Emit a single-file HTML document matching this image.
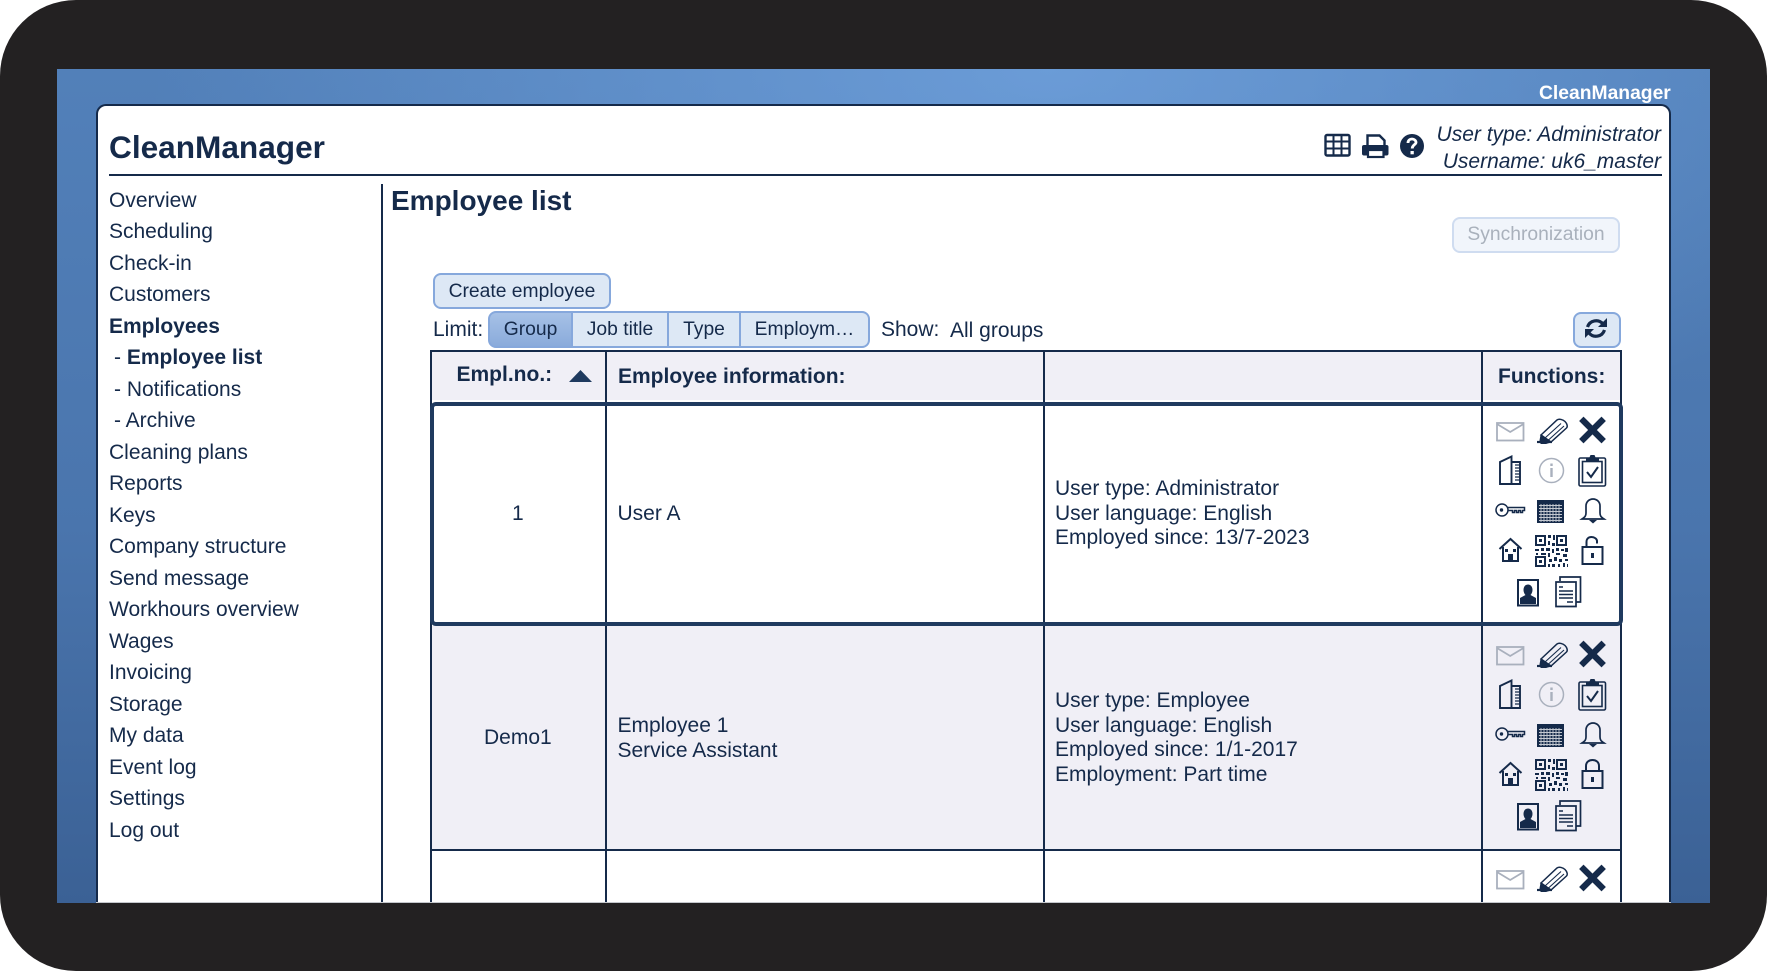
<!DOCTYPE html>
<html lang="en"><head><meta charset="utf-8"><title>CleanManager</title>
<style>
html,body{margin:0;padding:0;width:1767px;height:971px;overflow:hidden;background:#fff}
*{box-sizing:border-box}
body{font-family:"Liberation Sans",sans-serif;color:#152a4a;position:relative}
#bezel{position:absolute;left:0;top:0;width:1767px;height:971px;background:#232122;border-radius:76px}
#screen{position:absolute;left:57px;top:69px;width:1653px;height:834px;overflow:hidden;
background:radial-gradient(ellipse 900px 420px at 60% 0%,rgba(115,165,225,.75),rgba(115,165,225,0) 100%),linear-gradient(180deg,#5280b9 0%,#4a75ad 55%,#3b6195 100%)}
#panel{position:absolute;left:96px;top:104px;width:1575px;height:799px;background:#fff;border:2px solid #152a4a;border-bottom:0;border-radius:10px 10px 0 0}
.a{position:absolute;white-space:pre}
.t{font-size:21px;line-height:24px}
.nav{font-size:21px;line-height:24px}
.b{font-weight:bold}
.box{position:absolute}
.btn{position:absolute;border:2px solid #86a8dc;background:#dde8f5;border-radius:8px;text-align:center;font-size:19.3px;line-height:33px}
.seg{position:absolute;top:311px;height:37px;border:2px solid #86a8dc;border-left-width:0;background:#dde8f5;text-align:center;font-size:19.3px;line-height:33px}
.l{position:absolute;background:#152a4a}
</style></head><body>
<div id="bezel"></div>
<div id="screen"></div>
<div class="a b" style="left:1539px;top:83px;font-size:19.3px;line-height:22px;color:#fff">CleanManager</div>
<div id="panel"></div>

<div class="a b" style="left:109px;top:128px;font-size:31.6px;line-height:38px">CleanManager</div>
<div class="l" style="left:109px;top:174px;width:1553px;height:2px"></div>
<div class="l" style="left:381px;top:184px;width:2px;height:719px"></div>

<div class="a" style="right:106px;top:123px;font-size:21px;line-height:24px;font-style:italic">User type: Administrator</div>
<div class="a" style="right:106px;top:150px;font-size:21px;line-height:24px;font-style:italic">Username: uk6_master</div>

<div class="a nav" style="left:109px;top:188.500px">Overview</div>
<div class="a nav" style="left:109px;top:220px">Scheduling</div>
<div class="a nav" style="left:109px;top:251.500px">Check-in</div>
<div class="a nav" style="left:109px;top:283px">Customers</div>
<div class="a nav b" style="left:109px;top:314.500px">Employees</div>
<div class="a nav" style="left:114px;top:346px">- <span class="b">Employee list</span></div>
<div class="a nav" style="left:114px;top:377.500px">- Notifications</div>
<div class="a nav" style="left:114px;top:409px">- Archive</div>
<div class="a nav" style="left:109px;top:440.500px">Cleaning plans</div>
<div class="a nav" style="left:109px;top:472px">Reports</div>
<div class="a nav" style="left:109px;top:503.500px">Keys</div>
<div class="a nav" style="left:109px;top:535px">Company structure</div>
<div class="a nav" style="left:109px;top:566.500px">Send message</div>
<div class="a nav" style="left:109px;top:598px">Workhours overview</div>
<div class="a nav" style="left:109px;top:629.500px">Wages</div>
<div class="a nav" style="left:109px;top:661px">Invoicing</div>
<div class="a nav" style="left:109px;top:692.500px">Storage</div>
<div class="a nav" style="left:109px;top:724px">My data</div>
<div class="a nav" style="left:109px;top:755.500px">Event log</div>
<div class="a nav" style="left:109px;top:787px">Settings</div>
<div class="a nav" style="left:109px;top:818.500px">Log out</div>

<div class="a b" style="left:391px;top:184px;font-size:28px;line-height:34px">Employee list</div>

<div class="btn" style="left:1452px;top:217px;width:168px;height:36px;background:#f1f5fb;border-color:#cfdcf0;color:#a9b1bc;line-height:32px">Synchronization</div>
<div class="btn" style="left:433px;top:273px;width:178px;height:36px">Create employee</div>

<div class="a t" style="left:433px;top:318px">Limit:</div>
<div class="seg" style="left:488px;width:85px;border-left-width:2px;border-radius:8px 0 0 8px;background:linear-gradient(180deg,#a6c1e6,#8aabdb)">Group</div>
<div class="seg" style="left:573px;width:96px">Job title</div>
<div class="seg" style="left:669px;width:72px">Type</div>
<div class="seg" style="left:741px;width:129px;border-radius:0 8px 8px 0">Employm…</div>
<div class="a t" style="left:881px;top:318px">Show:</div>
<div class="a t" style="left:950px;top:319px">All groups</div>
<div class="btn" style="left:1573px;top:312px;width:48px;height:36px"></div>

<!-- table -->
<div class="box" style="left:430px;top:350px;width:1192px;height:50px;background:#f0eff6"></div>
<div class="box" style="left:430px;top:626px;width:1192px;height:223px;background:#f0eff6"></div>
<div class="l" style="left:430px;top:350px;width:1192px;height:2px"></div>
<div class="l" style="left:430px;top:849px;width:1192px;height:2px"></div>
<div class="l" style="left:430px;top:350px;width:2px;height:553px"></div>
<div class="l" style="left:1620px;top:350px;width:2px;height:553px"></div>
<div class="l" style="left:605px;top:350px;width:2px;height:553px"></div>
<div class="l" style="left:1043px;top:350px;width:2px;height:553px"></div>
<div class="l" style="left:1481px;top:350px;width:2px;height:553px"></div>
<div class="box" style="left:430px;top:402px;width:1193px;height:224px;border:4px solid #1f3a5f;border-radius:6px"></div>
<div class="box" style="left:96px;top:902px;width:1575px;height:1px;background:#c4c7cc"></div>

<div class="a b t" style="left:456.500px;top:363px">Empl.no.:</div>
<div class="a b t" style="left:618px;top:365px">Employee information:</div>
<div class="a b t" style="left:1498px;top:365px">Functions:</div>

<div class="a t" style="left:512px;top:502px">1</div>
<div class="a t" style="left:617.500px;top:502px">User A</div>
<div class="a t" style="left:1055px;top:477px">User type: Administrator</div>
<div class="a t" style="left:1055px;top:502px">User language: English</div>
<div class="a t" style="left:1055px;top:526px">Employed since: 13/7-2023</div>

<div class="a t" style="left:484px;top:726px">Demo1</div>
<div class="a t" style="left:617.500px;top:714px">Employee 1</div>
<div class="a t" style="left:617.500px;top:739px">Service Assistant</div>
<div class="a t" style="left:1055px;top:689px">User type: Employee</div>
<div class="a t" style="left:1055px;top:714px">User language: English</div>
<div class="a t" style="left:1055px;top:738px">Employed since: 1/1-2017</div>
<div class="a t" style="left:1055px;top:763px">Employment: Part time</div>

<svg class="a" style="left:0;top:0" width="1767" height="971" viewBox="0 0 1767 971" fill="none">
<defs>
<g id="ic-row1">
 <!-- mail -->
 <g stroke="#a9b0bd" stroke-width="1.800"><rect x="1497" y="423" width="26.500" height="17.500"/><path d="M1497 424l13.200 8 13.300-8"/></g>
 <!-- pencil -->
 <g stroke="#152a4a"><path d="M1537 442h15" stroke-width="2.200"/><path d="M1541 435l16-15c2-1.500 6-.5 8 1.500s3 5 1.500 6.500l-15.500 14z" stroke-width="1.500" fill="none"/><path d="M1541 435l10 7-5 1.500h-5l-1-3z" fill="#152a4a"/><path d="M1545 438l16-14.500M1548.500 440l15.500-14" stroke-width="1.100"/></g>
 <!-- x -->
 <path d="M1583.500 421l9 9 9-9M1583.500 439l9-9 9 9" stroke="#152a4a" stroke-width="6.200" stroke-linecap="square"/>
</g>
<g id="ic-rest">
 <!-- door/book -->
 <g stroke="#152a4a" stroke-width="1.900"><path d="M1500 484v-22l11.500-5.500v27.500h-11.500z"/><path d="M1511.500 462h8.500v22h-8.500"/><path d="M1515 465h5M1515 468h5M1515 471h5M1515 474h5M1515 477h5M1515 480h5" stroke-width="1.200"/></g>
 <!-- info -->
 <g stroke="#a9b0bd" stroke-width="1.500"><circle cx="1551.500" cy="470.500" r="12"/><path d="M1551.500 468v9" stroke-width="2.400"/><path d="M1551.500 463.500v2.500" stroke-width="2.400"/></g>
 <!-- clipboard -->
 <g stroke="#152a4a" stroke-width="1.600"><rect x="1579" y="458" width="26.500" height="28" rx="1.500"/><rect x="1582.500" y="461.500" width="19.500" height="21"/></g>
 <path d="M1586 462v-3.500h3l1.500-3.500h4l1.500 3.500h3v3.500z" fill="#152a4a"/>
 <path d="M1587 472l4 5 7-10" stroke="#152a4a" stroke-width="2"/>
 <!-- key -->
 <g stroke="#152a4a" stroke-width="1.500"><circle cx="1502" cy="510" r="6"/><path d="M1508 507.500h16.500v3h-2v2h-2v-2h-2v2h-2v-2h-2v2h-2v-2h-4.500"/></g>
 <circle cx="1501.500" cy="510" r="1.700" fill="#152a4a"/>
 <!-- calendar -->
 <rect x="1537" y="500" width="27" height="23" fill="#152a4a"/>
 <path d="M1539 505.500h23M1539 508.500h23M1539 511.500h23M1539 514.500h23M1539 517.500h23M1539 520.500h23M1541 504v18M1544 504v18M1547 504v18M1550 504v18M1553 504v18M1556 504v18M1559 504v18" stroke="#fff" stroke-width=".9" opacity=".75"/>
 <!-- bell -->
 <g stroke="#152a4a" stroke-width="1.700"><path d="M1582 519c3-2 4-3 4-6v-7c0-4 3-7 7-7s7 3 7 7v7c0 3 1 4 4 6z"/></g>
 <path d="M1589 520h8l-4 3.500z" fill="#152a4a"/>
 <!-- house -->
 <g stroke="#152a4a" stroke-width="2"><path d="M1499.500 549l11-10 11 10"/><path d="M1503 547v14h15v-14"/></g>
 <path d="M1508 561v-7h5v7z" fill="#152a4a"/><rect x="1505" y="549" width="3" height="3" fill="#152a4a"/><rect x="1513" y="549" width="3" height="3" fill="#152a4a"/>
 <!-- qr -->
 <g stroke="#152a4a" stroke-width="2"><rect x="1536" y="536" width="9" height="9"/><rect x="1557" y="536" width="9" height="9"/><rect x="1536" y="557" width="9" height="9"/></g>
 <path d="M1539 539h3v3h-3zM1560 539h3v3h-3zM1539 560h3v3h-3zM1548 535h3v3h-3zM1553 535h2v5h-2zM1548 541h2v4h-2zM1552 543h3v3h-3zM1535 549h4v2h-4zM1541 548h3v3h-3zM1546 548h4v3h-4zM1552 549h2v4h-2zM1556 548h3v3h-3zM1561 549h3v2h-3zM1565 548h3v4h-3zM1536 553h2v2h-2zM1541 553h5v2h-5zM1548 553h2v4h-2zM1556 553h4v2h-4zM1563 554h4v3h-4zM1549 559h3v3h-3zM1554 557h3v4h-3zM1559 559h3v3h-3zM1565 559h3v2h-3zM1548 564h2v3h-2zM1552 564h3v3h-3zM1558 564h2v3h-2zM1563 563h2v4h-2zM1567 564h1v3h-1z" fill="#152a4a"/>
 <!-- person -->
 <rect x="1518" y="580" width="20" height="25.500" stroke="#152a4a" stroke-width="2"/>
 <path d="M1528 584.500c3 0 4.500 2.500 4.500 5.500 0 2-1 4-2 5l5.500 3v6h-16v-6l5.500-3c-1-1-2-3-2-5 0-3 1.500-5.500 4.500-5.500z" fill="#152a4a"/>
 <!-- docs -->
 <g stroke="#152a4a" stroke-width="1.700"><path d="M1560 581v-4h20.500v25h-4"/><path d="M1556 582h20v24.500h-20z"/><path d="M1559 587h4M1559 591h14M1559 594.500h14M1559 598h14M1567 602h6" stroke-width="1.500"/></g>
</g>
<g id="openlock"><g stroke="#152a4a" stroke-width="2"><rect x="1582.500" y="547" width="20" height="17"/><path d="M1586.500 547v-5c0-3 2-5 5-5s5.500 2 5.500 4v2.500"/></g><path d="M1591 553h3v5h-3z" fill="#152a4a"/></g>
<g id="lock"><g stroke="#152a4a" stroke-width="2"><rect x="1582.500" y="547" width="20" height="17"/><path d="M1586 547v-5c0-4 3-6 6.500-6s6.500 2 6.500 6v5"/></g><path d="M1591 553h3v5h-3z" fill="#152a4a"/></g>
</defs>

<use href="#ic-row1"/><use href="#ic-rest"/><use href="#openlock"/>
<g transform="translate(0,224)"><use href="#ic-row1"/><use href="#ic-rest"/><use href="#lock"/></g>
<g transform="translate(0,448)"><use href="#ic-row1"/></g>

<!-- sort triangle -->
<path d="M580.500 370l11.500 12h-23z" fill="#1f3a5f"/>

<!-- header icons -->
<g stroke="#152a4a" stroke-width="2.400"><rect x="1325.500" y="135" width="24" height="20.500" rx="1.500"/><path d="M1325.500 141.500h24M1325.500 148.500h24" stroke-width="2"/><path d="M1333.500 135v20M1341.500 135v20" stroke-width="2"/></g>
<path d="M1367.500 146v-10.500h12l5 5v5.500" stroke="#152a4a" stroke-width="2.400" fill="none"/>
<rect x="1362" y="145" width="26.500" height="10.500" rx="2" fill="#152a4a"/>
<rect x="1368" y="150" width="15.500" height="7" fill="#fff" stroke="#152a4a" stroke-width="2.200"/>
<circle cx="1412" cy="146" r="12" fill="#152a4a"/>
<path d="M1408 143c0-2.500 1.800-4 4-4s4 1.500 4 3.500-3.800 2.500-3.800 6" stroke="#fff" stroke-width="2.800" fill="none"/><rect x="1410.500" y="151" width="3.300" height="3.300" fill="#fff"/>

<!-- refresh -->
<path d="M1587.500 327a9 9 0 0 1 15.500-3M1604.500 330a9 9 0 0 1-15.500 3" stroke="#152a4a" stroke-width="3.200" fill="none"/>
<path d="M1607 318v9h-9zM1585 338v-9h9z" fill="#152a4a"/>
</svg>
</body></html>
